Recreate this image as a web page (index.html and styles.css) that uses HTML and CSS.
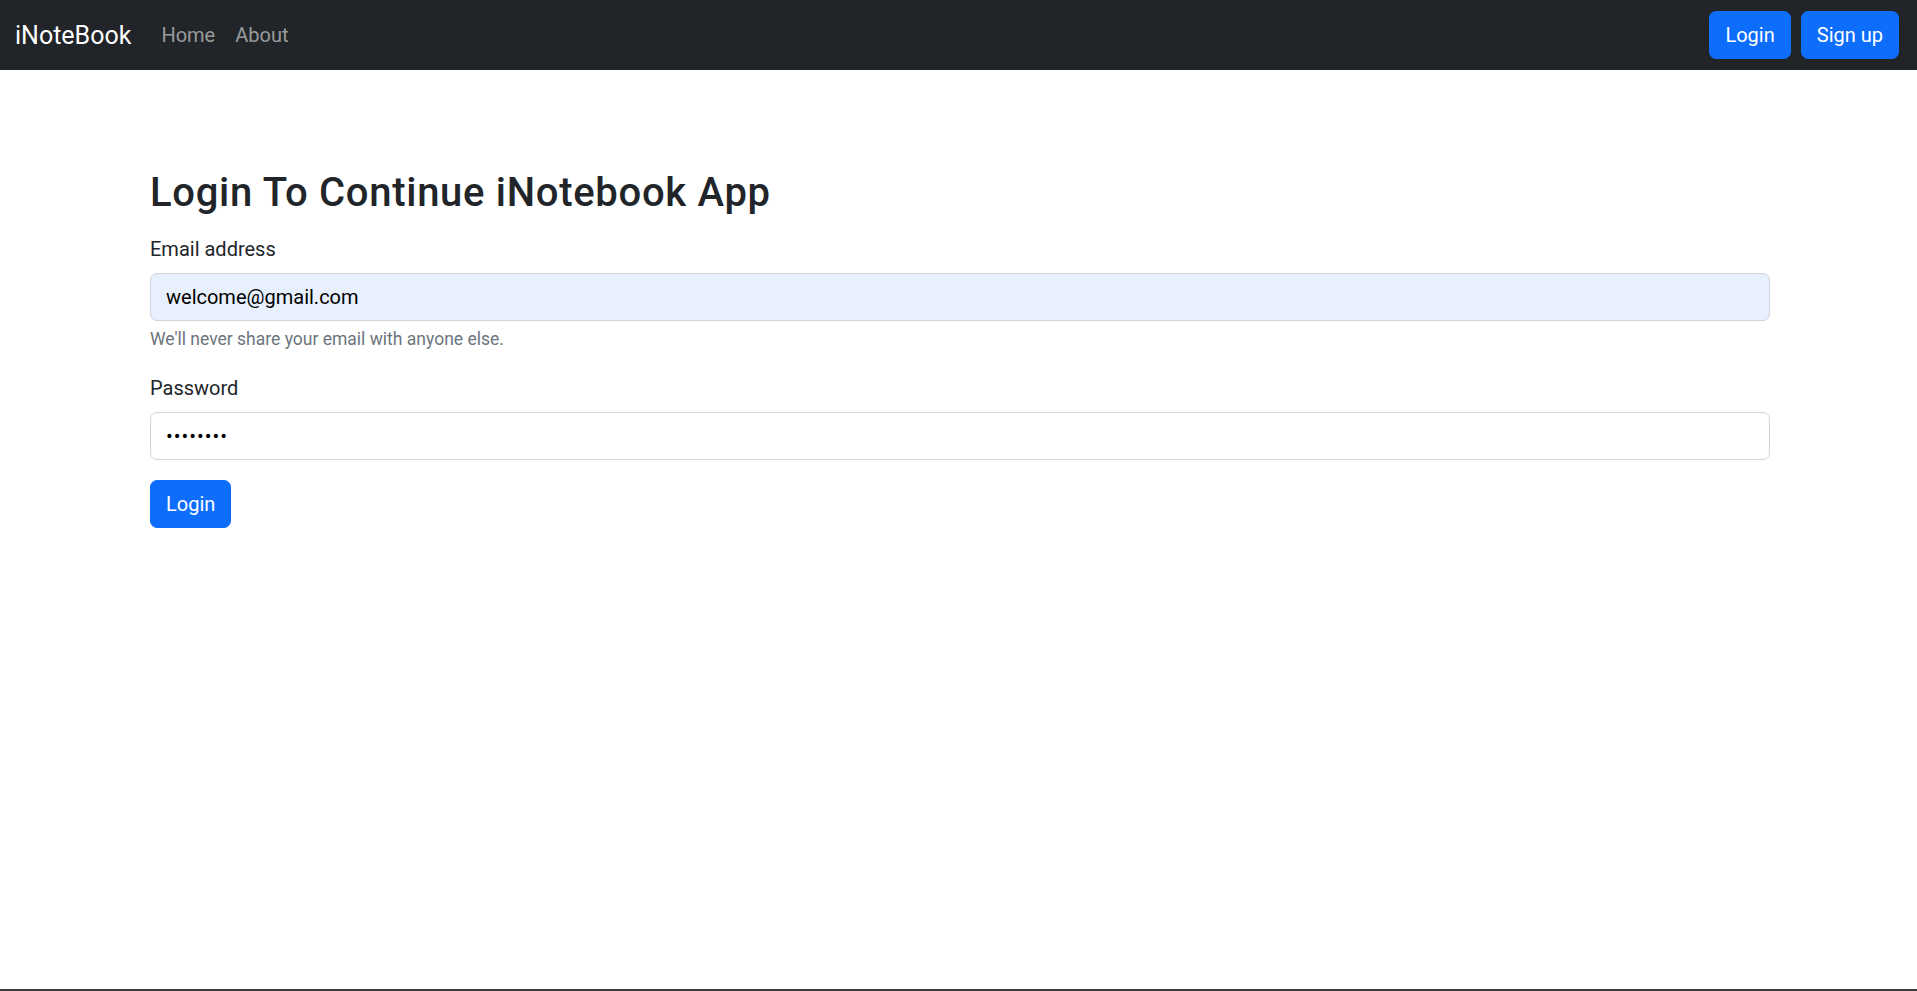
FILE: index.html
```html
<!DOCTYPE html>
<html lang="en">
<head>
<meta charset="utf-8">
<title>iNoteBook</title>
<link rel="stylesheet" href="styles.css">
</head>
<body>
<div class="page">
  <nav class="navbar">
    <div class="nav-left">
      <a class="brand" href="#">iNoteBook</a>
      <ul class="nav-links">
        <li><a class="nav-link" href="#">Home</a></li>
        <li><a class="nav-link" href="#">About</a></li>
      </ul>
    </div>
    <div class="nav-right">
      <a class="btn btn-primary" href="#">Login</a>
      <a class="btn btn-primary" href="#">Sign up</a>
    </div>
  </nav>
  <main class="container">
    <h2 class="title">Login To Continue iNotebook App</h2>
    <form class="form">
      <div class="field">
        <label class="form-label" for="email">Email address</label>
        <input class="form-control autofill" type="email" id="email" value="welcome@gmail.com">
        <div class="form-text">We'll never share your email with anyone else.</div>
      </div>
      <div class="field">
        <label class="form-label" for="password">Password</label>
        <input class="form-control" type="password" id="password" value="password">
      </div>
      <button type="button" class="btn btn-primary btn-submit">Login</button>
    </form>
  </main>
</div>
</body>
</html>
```
FILE: styles.css
```css
* { box-sizing: border-box; }
html, body { margin: 0; padding: 0; }
body {
  font-family: "Segoe UI", Roboto, "Liberation Sans", sans-serif;
  font-size: 20px;
  line-height: 1.5;
  color: #212529;
  background: #fff;
}
.page {
  min-height: 100vh;
  border-bottom: 2px solid #3c3c3c;
}
.navbar {
  height: 70px;
  background: #212529;
  display: flex;
  align-items: center;
  justify-content: space-between;
  padding: 0 15px;
}
.nav-left { display: flex; align-items: center; }
.brand {
  font-size: 25px;
  color: #fff;
  text-decoration: none;
  margin-right: 20px;
  line-height: 1.5;
  padding-top: 2px;
}
.nav-links { list-style: none; margin: 0; padding: 0; display: flex; }
.nav-link {
  display: block;
  padding: 10px 10px;
  color: rgba(255,255,255,.55);
  text-decoration: none;
  font-size: 20px;
}
.nav-right { display: flex; gap: 10px; margin-right: 3px; }
.btn {
  display: inline-block;
  font-family: inherit;
  font-size: 20px;
  line-height: 30px;
  padding: 8px 15px;
  border: 1px solid transparent;
  border-radius: 7px;
  text-decoration: none;
  cursor: pointer;
}
.btn-primary {
  background: #0d6efd;
  border-color: #0d6efd;
  color: #fff;
}
.container {
  width: 1620px;
  margin-left: 150px;
  padding-top: 99px;
}
.title {
  font-size: 40px;
  font-weight: 500;
  line-height: 48px;
  letter-spacing: 0.7px;
  margin: 0 0 17px;
}
.field { margin-bottom: 21px; }
.form-label {
  display: block;
  margin-bottom: 9px;
  line-height: 30px;
}
.form-control {
  display: block;
  width: 100%;
  height: 48px;
  font-family: inherit;
  font-size: 20px;
  line-height: 30px;
  padding: 7px 15px;
  color: #212529;
  background: #fff;
  border: 1px solid #ced4da;
  border-radius: 7px;
  outline: none;
}
.form-control.autofill {
  background: #e8f0fe;
  color: #000;
}
.form-control[type="password"] { color: #000; letter-spacing: 1px; }
.form-text {
  margin-top: 5px;
  font-size: 17.5px;
  color: #6c757d;
}
.btn-submit { margin-top: -1px; }
```
